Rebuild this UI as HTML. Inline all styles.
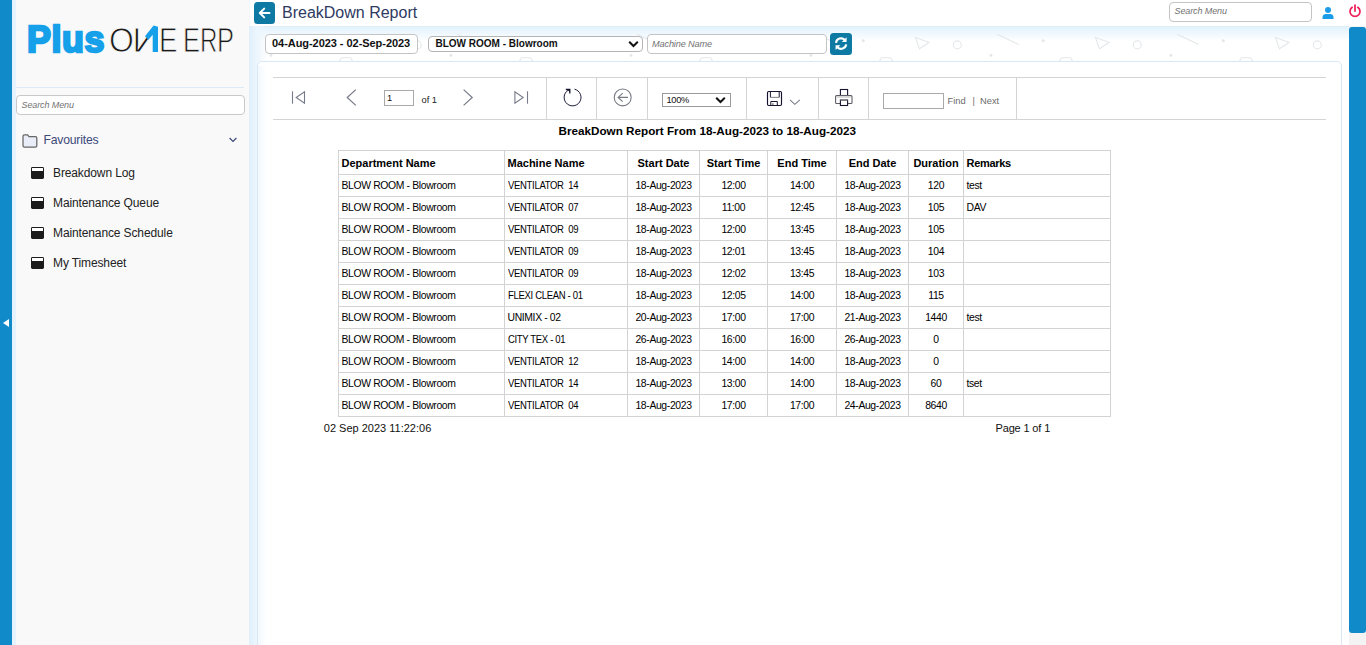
<!DOCTYPE html>
<html lang="en">
<head>
<meta charset="utf-8">
<title>BreakDown Report</title>
<style>
*{box-sizing:border-box;margin:0;padding:0}
html,body{width:1366px;height:645px;overflow:hidden;background:#fff;font-family:"Liberation Sans",sans-serif;color:#222}
.abs{position:absolute}
#leftbar{left:0;top:0;width:12px;height:645px;background:#108ac8}
#leftbar:after{content:"";position:absolute;left:3px;top:319px;border-right:6px solid #fff;border-top:4.5px solid transparent;border-bottom:4.5px solid transparent}
#lstrip{left:12px;top:0;width:4px;height:645px;background:#e4f3fd}
#sidebar{left:16px;top:0;width:233px;height:645px;background:#f9f9f9}
#sbline{left:16px;top:87px;width:228px;height:1px;background:#dde8f8}
#sbedge{left:249px;top:0;width:1px;height:26px;background:#f3f6fa}
.logo{white-space:nowrap;line-height:1;transform-origin:0 0}
#plus{left:27.2px;top:21.6px;font-size:36.6px;font-weight:bold;color:#16a0ea;-webkit-text-stroke:2.4px #16a0ea;transform:scaleX(.98);letter-spacing:0.6px}
.L{display:inline-block;transform-origin:0 0;vertical-align:baseline}
.thin{font-size:35.5px;color:#1a1a1a;-webkit-text-stroke:0.9px #f9f9f9}
#search1{left:16px;top:95px;width:229px;height:20px;border:1px solid #c9c9c9;border-radius:4px;background:#fff}
.ph{font-style:italic;color:#737373;white-space:nowrap}
.sbt{font-size:12px;white-space:nowrap;letter-spacing:-0.12px;line-height:14px}
.mi{width:13.5px;height:11.8px;background:#1b1b1b;border-radius:1.4px}
.mi:after{content:"";position:absolute;left:1.5px;top:1.6px;width:10.5px;height:2.5px;background:#fff;border-radius:.3px}
#content{left:250px;top:0;width:1099px;height:645px;background:#fff}
#topgrad{left:250px;top:26px;width:1099px;height:36px;background:linear-gradient(#dce9f6,#e3f2fc 1px,#eef7fe 7px,#fff 15px)}
#leftgrad{left:249px;top:26px;width:19px;height:619px;background:linear-gradient(90deg,#e0effb,#ecf6fd 8px,rgba(255,255,255,0))}
#card{left:257px;top:61px;width:1085px;height:600px;border:1px solid #d9e6f6;border-radius:5px;background:#fff}
#cardgrad{left:258px;top:66px;width:9px;height:579px;background:linear-gradient(90deg,#f2f8fe,rgba(255,255,255,0))}
#back{left:254px;top:2px;width:21px;height:22px;background:#0e7aa3;border-radius:3.5px}
#title{left:282px;top:3.4px;font-size:16px;line-height:19px;color:#2e3a62;white-space:nowrap}
.inp{background:#fff;border:1px solid #c4c4c4;border-radius:4px}
.bold{font-weight:bold;color:#111;white-space:nowrap}
#refresh{left:830px;top:33px;width:22px;height:22px;background:#0e7aa3;border-radius:3.5px}
#track{left:1349px;top:26px;width:17px;height:619px;background:#f3f3f3}
#thumb{left:1349px;top:27px;width:17px;height:605.6px;background:#108ac8;border-radius:3px}
.hl{height:1px;background:#d4d4d4}
.vl{width:1px;background:#d4d4d4}
.tb{font-size:9.3px;color:#6a6a6a;white-space:nowrap}
table{position:absolute;left:338px;top:150px;border-collapse:collapse;table-layout:fixed;width:773px}
td,th{border:1px solid #d3d3d3;font-size:10.4px;letter-spacing:-0.36px;color:#000;white-space:pre;overflow:hidden;padding:0 0 0 2.5px;text-align:left;height:22px;line-height:12px;vertical-align:middle}
th{font-size:11px;letter-spacing:0;font-weight:bold;height:24px;padding-top:1px;color:#000}
.c{text-align:center;padding:0}
.m{display:inline-block;transform-origin:0 50%;transform:scaleX(.917)}
</style>
</head>
<body>
<div id="content" class="abs"></div>
<div id="topgrad" class="abs"></div>
<svg class="abs" style="left:250px;top:26px" width="1099" height="36" viewBox="250 26 1099 36"><defs><pattern id="deco" x="143" y="26" width="180" height="36" patternUnits="userSpaceOnUse"><g fill="none" stroke="#e4e7ea" stroke-width="1.1"><circle cx="0.2" cy="14.8" r="1" fill="#e4e7ea"/><circle cx="180.2" cy="14.8" r="1" fill="#e4e7ea"/><path d="M52.4 11.5 L66 16.3 L56.5 22.9 Z"/><circle cx="94.3" cy="18.9" r="4"/><path d="M134.1 8.2 L155.7 18.5"/><circle cx="128" cy="29.2" r="1" fill="#e4e7ea"/><path d="M16.3 35.5 L18.5 31.7 H27.5 L29.8 35.5"/></g></pattern></defs><rect x="250" y="26" width="1099" height="36" fill="url(#deco)"/></svg>
<div id="leftgrad" class="abs"></div>

<div id="leftbar" class="abs"></div>
<div id="lstrip" class="abs"></div>
<div id="sidebar" class="abs"></div>
<div id="sbedge" class="abs"></div>
<div id="sbline" class="abs"></div>

<!-- logo -->
<div id="plus" class="abs logo">Plus</div>
<div id="logo2" class="abs logo thin" style="left:0;top:23.2px;width:250px;height:36px;padding-left:109.4px"><span class="L" style="width:50.5px;transform:scaleX(.9)">O</span><span class="L" style="width:0;transform:scaleX(-1.09)">N</span><span class="L" style="margin-left:-0.6px;width:14.3px;transform:scaleX(.78)">E</span> <span class="L" style="width:16.3px;transform:scaleX(.72)">E</span><span class="L" style="width:17.7px;transform:scaleX(.68)">R</span><span class="L" style="width:20px;transform:scaleX(.72)">P</span></div>
<svg class="abs" style="left:140px;top:22px" width="22" height="32" viewBox="0 0 22 32"><path d="M13.6 3.4 L18 4.7 V30 H12.7 V12.7 L8.4 17.7 L5 14.3 Z" fill="#16a0ea"/></svg>

<div id="search1" class="abs"></div>
<div class="abs ph" style="left:21.5px;top:99px;font-size:9px;line-height:12px;letter-spacing:-0.1px">Search Menu</div>

<!-- sidebar menu -->
<svg class="abs" style="left:22.3px;top:133px" width="16" height="16" viewBox="0 0 16 16"><path d="M1 3.2 Q1 1.8 2.4 1.8 H5.6 L7 3.6 H13.4 Q14.8 3.6 14.8 5 V12.8 Q14.8 14.2 13.4 14.2 H2.4 Q1 14.2 1 12.8 Z" fill="#e9edf7" stroke="#666" stroke-width="1.25"/></svg>
<div class="abs sbt" style="left:43.5px;top:132.5px;color:#3d4a7a;font-size:12.2px;letter-spacing:-0.2px">Favourites</div>
<svg class="abs" style="left:228px;top:136px" width="10" height="8" viewBox="0 0 10 8"><path d="M1.6 2 L5 5.4 L8.4 2" fill="none" stroke="#3d4a7a" stroke-width="1.2"/></svg>

<div class="abs mi" style="left:30.6px;top:166.8px"></div>
<div class="abs sbt" style="left:53px;top:166px">Breakdown Log</div>
<div class="abs mi" style="left:30.6px;top:196.8px"></div>
<div class="abs sbt" style="left:53px;top:196px">Maintenance Queue</div>
<div class="abs mi" style="left:30.6px;top:226.8px"></div>
<div class="abs sbt" style="left:53px;top:226px">Maintenance Schedule</div>
<div class="abs mi" style="left:30.6px;top:256.8px"></div>
<div class="abs sbt" style="left:53px;top:256px">My Timesheet</div>

<!-- header -->
<div id="back" class="abs"><svg width="21" height="22" viewBox="0 0 21 22"><path d="M15.5 11 H6 M10.2 6.6 L5.8 11 L10.2 15.4" fill="none" stroke="#fff" stroke-width="2" stroke-linecap="round" stroke-linejoin="round"/></svg></div>
<div id="title" class="abs">BreakDown Report</div>

<div class="abs inp" style="left:1169px;top:2px;width:143px;height:20px"></div>
<div class="abs ph" style="left:1174.5px;top:5px;font-size:9px;line-height:12px;letter-spacing:-0.1px">Search Menu</div>
<svg class="abs" style="left:1321px;top:5.7px" width="14" height="14" viewBox="0 0 14 14"><circle cx="7" cy="4" r="3" fill="#1c9be8"/><path d="M1.5 13 V11.5 Q1.5 8 5 8 H9 Q12.5 8 12.5 11.5 V13 Z" fill="#1c9be8"/></svg>
<svg class="abs" style="left:1348px;top:4.3px" width="14" height="14" viewBox="0 0 14 14"><path d="M4.2 3.3 A5 5 0 1 0 9.8 3.3" fill="none" stroke="#f0215a" stroke-width="1.75" stroke-linecap="round"/><path d="M7 1 V7" stroke="#f0215a" stroke-width="1.75" stroke-linecap="round"/></svg>

<!-- filters -->
<div class="abs inp" style="left:265px;top:34px;width:153px;height:20px"></div>
<div class="abs bold" style="left:272px;top:37px;font-size:11px;line-height:13px;letter-spacing:-0.05px">04-Aug-2023 - 02-Sep-2023</div>
<div class="abs inp" style="left:428px;top:36px;width:215px;height:16px;border-color:#b5b5b5"></div>
<div class="abs bold" style="left:435.5px;top:38px;font-size:10px;line-height:12px">BLOW ROOM - Blowroom</div>
<svg class="abs" style="left:627px;top:39px" width="13" height="10" viewBox="0 0 13 10"><path d="M2.2 2.8 L6.5 7 L10.8 2.8" fill="none" stroke="#111" stroke-width="2"/></svg>
<div class="abs inp" style="left:647px;top:34px;width:180px;height:20px"></div>
<div class="abs ph" style="left:652px;top:38px;font-size:9.2px;line-height:12px;letter-spacing:-0.15px">Machine Name</div>
<div id="refresh" class="abs"><svg width="22" height="22" viewBox="0 0 22 22"><path d="M6 9.8 A5.1 5.1 0 0 1 14.8 7" fill="none" stroke="#fff" stroke-width="2.1"/><path d="M16.2 11.4 A5.1 5.1 0 0 1 7.4 14.2" fill="none" stroke="#fff" stroke-width="2.1"/><path d="M16.6 4.2 V9 H11.8 Z M5.6 17 V12.2 H10.4 Z" fill="#fff"/></svg></div>

<!-- card -->
<div id="card" class="abs"></div>
<div id="cardgrad" class="abs"></div>

<!-- toolbar -->
<div class="abs hl" style="left:273px;top:77px;width:1053px"></div>
<div class="abs hl" style="left:273px;top:119px;width:1053px"></div>
<div class="abs vl" style="left:546px;top:77px;height:42px"></div>
<div class="abs vl" style="left:596px;top:77px;height:42px"></div>
<div class="abs vl" style="left:647px;top:77px;height:42px"></div>
<div class="abs vl" style="left:746px;top:77px;height:42px"></div>
<div class="abs vl" style="left:818px;top:77px;height:42px"></div>
<div class="abs vl" style="left:868px;top:77px;height:42px"></div>
<div class="abs vl" style="left:1016px;top:77px;height:42px"></div>

<svg class="abs" style="left:288px;top:87px" width="20" height="20" viewBox="0 0 20 20"><path d="M4.5 4.3 V16.7" stroke="#777a88" stroke-width="1.1" fill="none"/><path d="M16.5 4.8 V16.2 L8.2 10.5 Z" fill="none" stroke="#777a88" stroke-width="1.1"/></svg>
<svg class="abs" style="left:342px;top:87px" width="20" height="20" viewBox="0 0 20 20"><path d="M13.8 2.6 L5.2 10.5 L13.8 18.4" fill="none" stroke="#777a88" stroke-width="1.2"/></svg>
<div class="abs" style="left:384px;top:90px;width:30px;height:16px;border:1px solid #a9a9a9;background:#fff"></div>
<div class="abs" style="left:387px;top:93px;font-size:9.3px;line-height:11px;color:#111">1</div>
<div class="abs" style="left:421.5px;top:94.5px;font-size:9.3px;line-height:11px;color:#222;white-space:nowrap">of 1</div>
<svg class="abs" style="left:458px;top:87px" width="20" height="20" viewBox="0 0 20 20"><path d="M5.6 2.6 L14.2 10.5 L5.6 18.4" fill="none" stroke="#777a88" stroke-width="1.2"/></svg>
<svg class="abs" style="left:511px;top:87px" width="20" height="20" viewBox="0 0 20 20"><path d="M16.5 4.3 V16.7" stroke="#777a88" stroke-width="1.1" fill="none"/><path d="M3.9 4.8 V16.2 L12.2 10.5 Z" fill="none" stroke="#777a88" stroke-width="1.1"/></svg>
<svg class="abs" style="left:560px;top:85px" width="26" height="26" viewBox="0 0 26 26"><path d="M14.54 4.2 A8.45 8.45 0 1 1 9.9 4.4" fill="none" stroke="#1d1d3a" stroke-width="1"/><path d="M5.8 4.5 H9.8 V8.4" fill="none" stroke="#15152e" stroke-width="1.3"/><path d="M7.4 4.5 H9.8 V6.9 Z" fill="#15152e"/></svg>
<svg class="abs" style="left:610px;top:85px" width="26" height="26" viewBox="0 0 26 26"><circle cx="12.7" cy="12.4" r="8.45" fill="none" stroke="#787a84" stroke-width="1.1"/><path d="M18 12.4 H8.3 M12.7 8.1 L8.1 12.4 L12.7 16.7" fill="none" stroke="#787a84" stroke-width="1.1"/></svg>

<div class="abs" style="left:662px;top:93px;width:69px;height:14px;border:1px solid #9a9a9a;background:#fff"></div>
<div class="abs" style="left:666.5px;top:94.5px;font-size:9.3px;line-height:11px;color:#111;letter-spacing:-0.3px">100%</div>
<svg class="abs" style="left:714px;top:95px" width="13" height="10" viewBox="0 0 13 10"><path d="M2.2 2.8 L6.5 7 L10.8 2.8" fill="none" stroke="#111" stroke-width="2"/></svg>

<svg class="abs" style="left:760px;top:85px" width="46" height="26" viewBox="760 85 46 26"><rect x="767.5" y="91.5" width="14" height="14" rx="1.2" fill="none" stroke="#17132e" stroke-width="1.15"/><path d="M770.4 91.6 V97.4 M779.2 91.6 V97.4 M770.8 105.4 V101.5 H777.3 V105.4" fill="none" stroke="#17132e" stroke-width="1"/><path d="M770.4 97.4 H779.2" stroke="#8a8a8a" stroke-width="1.1"/><path d="M772.9 103.2 V105.4" stroke="#5a4a3a" stroke-width="1"/><path d="M790 99.9 L794.8 104.3 L799.9 99.9" fill="none" stroke="#777a88" stroke-width="1.05"/></svg>
<svg class="abs" style="left:830px;top:85px" width="28" height="26" viewBox="830 85 28 26"><rect x="840.4" y="89.5" width="7.2" height="6" fill="none" stroke="#17132e" stroke-width="1.1"/><rect x="835.6" y="95.6" width="16.4" height="7.9" rx="1" fill="#fff" stroke="#5d5d66" stroke-width="1.1"/><path d="M837 97.3 H850.6" stroke="#d9d9d9" stroke-width="1.2"/><rect x="840.4" y="100" width="7.2" height="5.5" fill="#fff" stroke="#17132e" stroke-width="1.1"/><path d="M840.4 100 H847.6" stroke="#8a8a8a" stroke-width="1.1"/></svg>

<div class="abs" style="left:883px;top:93px;width:61px;height:16px;border:1px solid #a9a9a9;background:#fff"></div>
<div class="abs tb" style="left:947.5px;top:95px;line-height:12px">Find</div>
<div class="abs tb" style="left:972.5px;top:95px;line-height:12px">|</div>
<div class="abs tb" style="left:980px;top:95px;line-height:12px">Next</div>

<!-- report -->
<div class="abs" style="left:558.5px;top:124px;font-size:11.7px;line-height:14px;font-weight:bold;color:#000;white-space:nowrap">BreakDown Report From 18-Aug-2023 to 18-Aug-2023</div>

<table>
<colgroup><col style="width:166px"><col style="width:123px"><col style="width:72px"><col style="width:68px"><col style="width:69px"><col style="width:72px"><col style="width:55px"><col style="width:147px"></colgroup>
<tr><th>Department Name</th><th>Machine Name</th><th class="c">Start Date</th><th class="c">Start Time</th><th class="c">End Time</th><th class="c">End Date</th><th class="c">Duration</th><th style="letter-spacing:-0.3px">Remarks</th></tr>
<tr><td>BLOW ROOM - Blowroom</td><td><span class="m">VENTILATOR  14</span></td><td class="c">18-Aug-2023</td><td class="c">12:00</td><td class="c">14:00</td><td class="c">18-Aug-2023</td><td class="c">120</td><td>test</td></tr>
<tr><td>BLOW ROOM - Blowroom</td><td><span class="m">VENTILATOR  07</span></td><td class="c">18-Aug-2023</td><td class="c">11:00</td><td class="c">12:45</td><td class="c">18-Aug-2023</td><td class="c">105</td><td>DAV</td></tr>
<tr><td>BLOW ROOM - Blowroom</td><td><span class="m">VENTILATOR  09</span></td><td class="c">18-Aug-2023</td><td class="c">12:00</td><td class="c">13:45</td><td class="c">18-Aug-2023</td><td class="c">105</td><td></td></tr>
<tr><td>BLOW ROOM - Blowroom</td><td><span class="m">VENTILATOR  09</span></td><td class="c">18-Aug-2023</td><td class="c">12:01</td><td class="c">13:45</td><td class="c">18-Aug-2023</td><td class="c">104</td><td></td></tr>
<tr><td>BLOW ROOM - Blowroom</td><td><span class="m">VENTILATOR  09</span></td><td class="c">18-Aug-2023</td><td class="c">12:02</td><td class="c">13:45</td><td class="c">18-Aug-2023</td><td class="c">103</td><td></td></tr>
<tr><td>BLOW ROOM - Blowroom</td><td><span class="m">FLEXI CLEAN - 01</span></td><td class="c">18-Aug-2023</td><td class="c">12:05</td><td class="c">14:00</td><td class="c">18-Aug-2023</td><td class="c">115</td><td></td></tr>
<tr><td>BLOW ROOM - Blowroom</td><td>UNIMIX - 02</td><td class="c">20-Aug-2023</td><td class="c">17:00</td><td class="c">17:00</td><td class="c">21-Aug-2023</td><td class="c">1440</td><td>test</td></tr>
<tr><td>BLOW ROOM - Blowroom</td><td><span class="m">CITY TEX - 01</span></td><td class="c">26-Aug-2023</td><td class="c">16:00</td><td class="c">16:00</td><td class="c">26-Aug-2023</td><td class="c">0</td><td></td></tr>
<tr><td>BLOW ROOM - Blowroom</td><td><span class="m">VENTILATOR  12</span></td><td class="c">18-Aug-2023</td><td class="c">14:00</td><td class="c">14:00</td><td class="c">18-Aug-2023</td><td class="c">0</td><td></td></tr>
<tr><td>BLOW ROOM - Blowroom</td><td><span class="m">VENTILATOR  14</span></td><td class="c">18-Aug-2023</td><td class="c">13:00</td><td class="c">14:00</td><td class="c">18-Aug-2023</td><td class="c">60</td><td>tset</td></tr>
<tr><td>BLOW ROOM - Blowroom</td><td><span class="m">VENTILATOR  04</span></td><td class="c">18-Aug-2023</td><td class="c">17:00</td><td class="c">17:00</td><td class="c">24-Aug-2023</td><td class="c">8640</td><td></td></tr>
</table>

<div class="abs" style="left:323.8px;top:421.6px;font-size:11px;line-height:13px;color:#111;white-space:nowrap">02 Sep 2023 11:22:06</div>
<div class="abs" style="left:995.5px;top:421.6px;font-size:11px;line-height:13px;color:#111;white-space:nowrap;letter-spacing:-0.15px">Page 1 of 1</div>

<!-- scrollbar -->
<div id="track" class="abs"></div>
<div id="thumb" class="abs"></div>
</body>
</html>
